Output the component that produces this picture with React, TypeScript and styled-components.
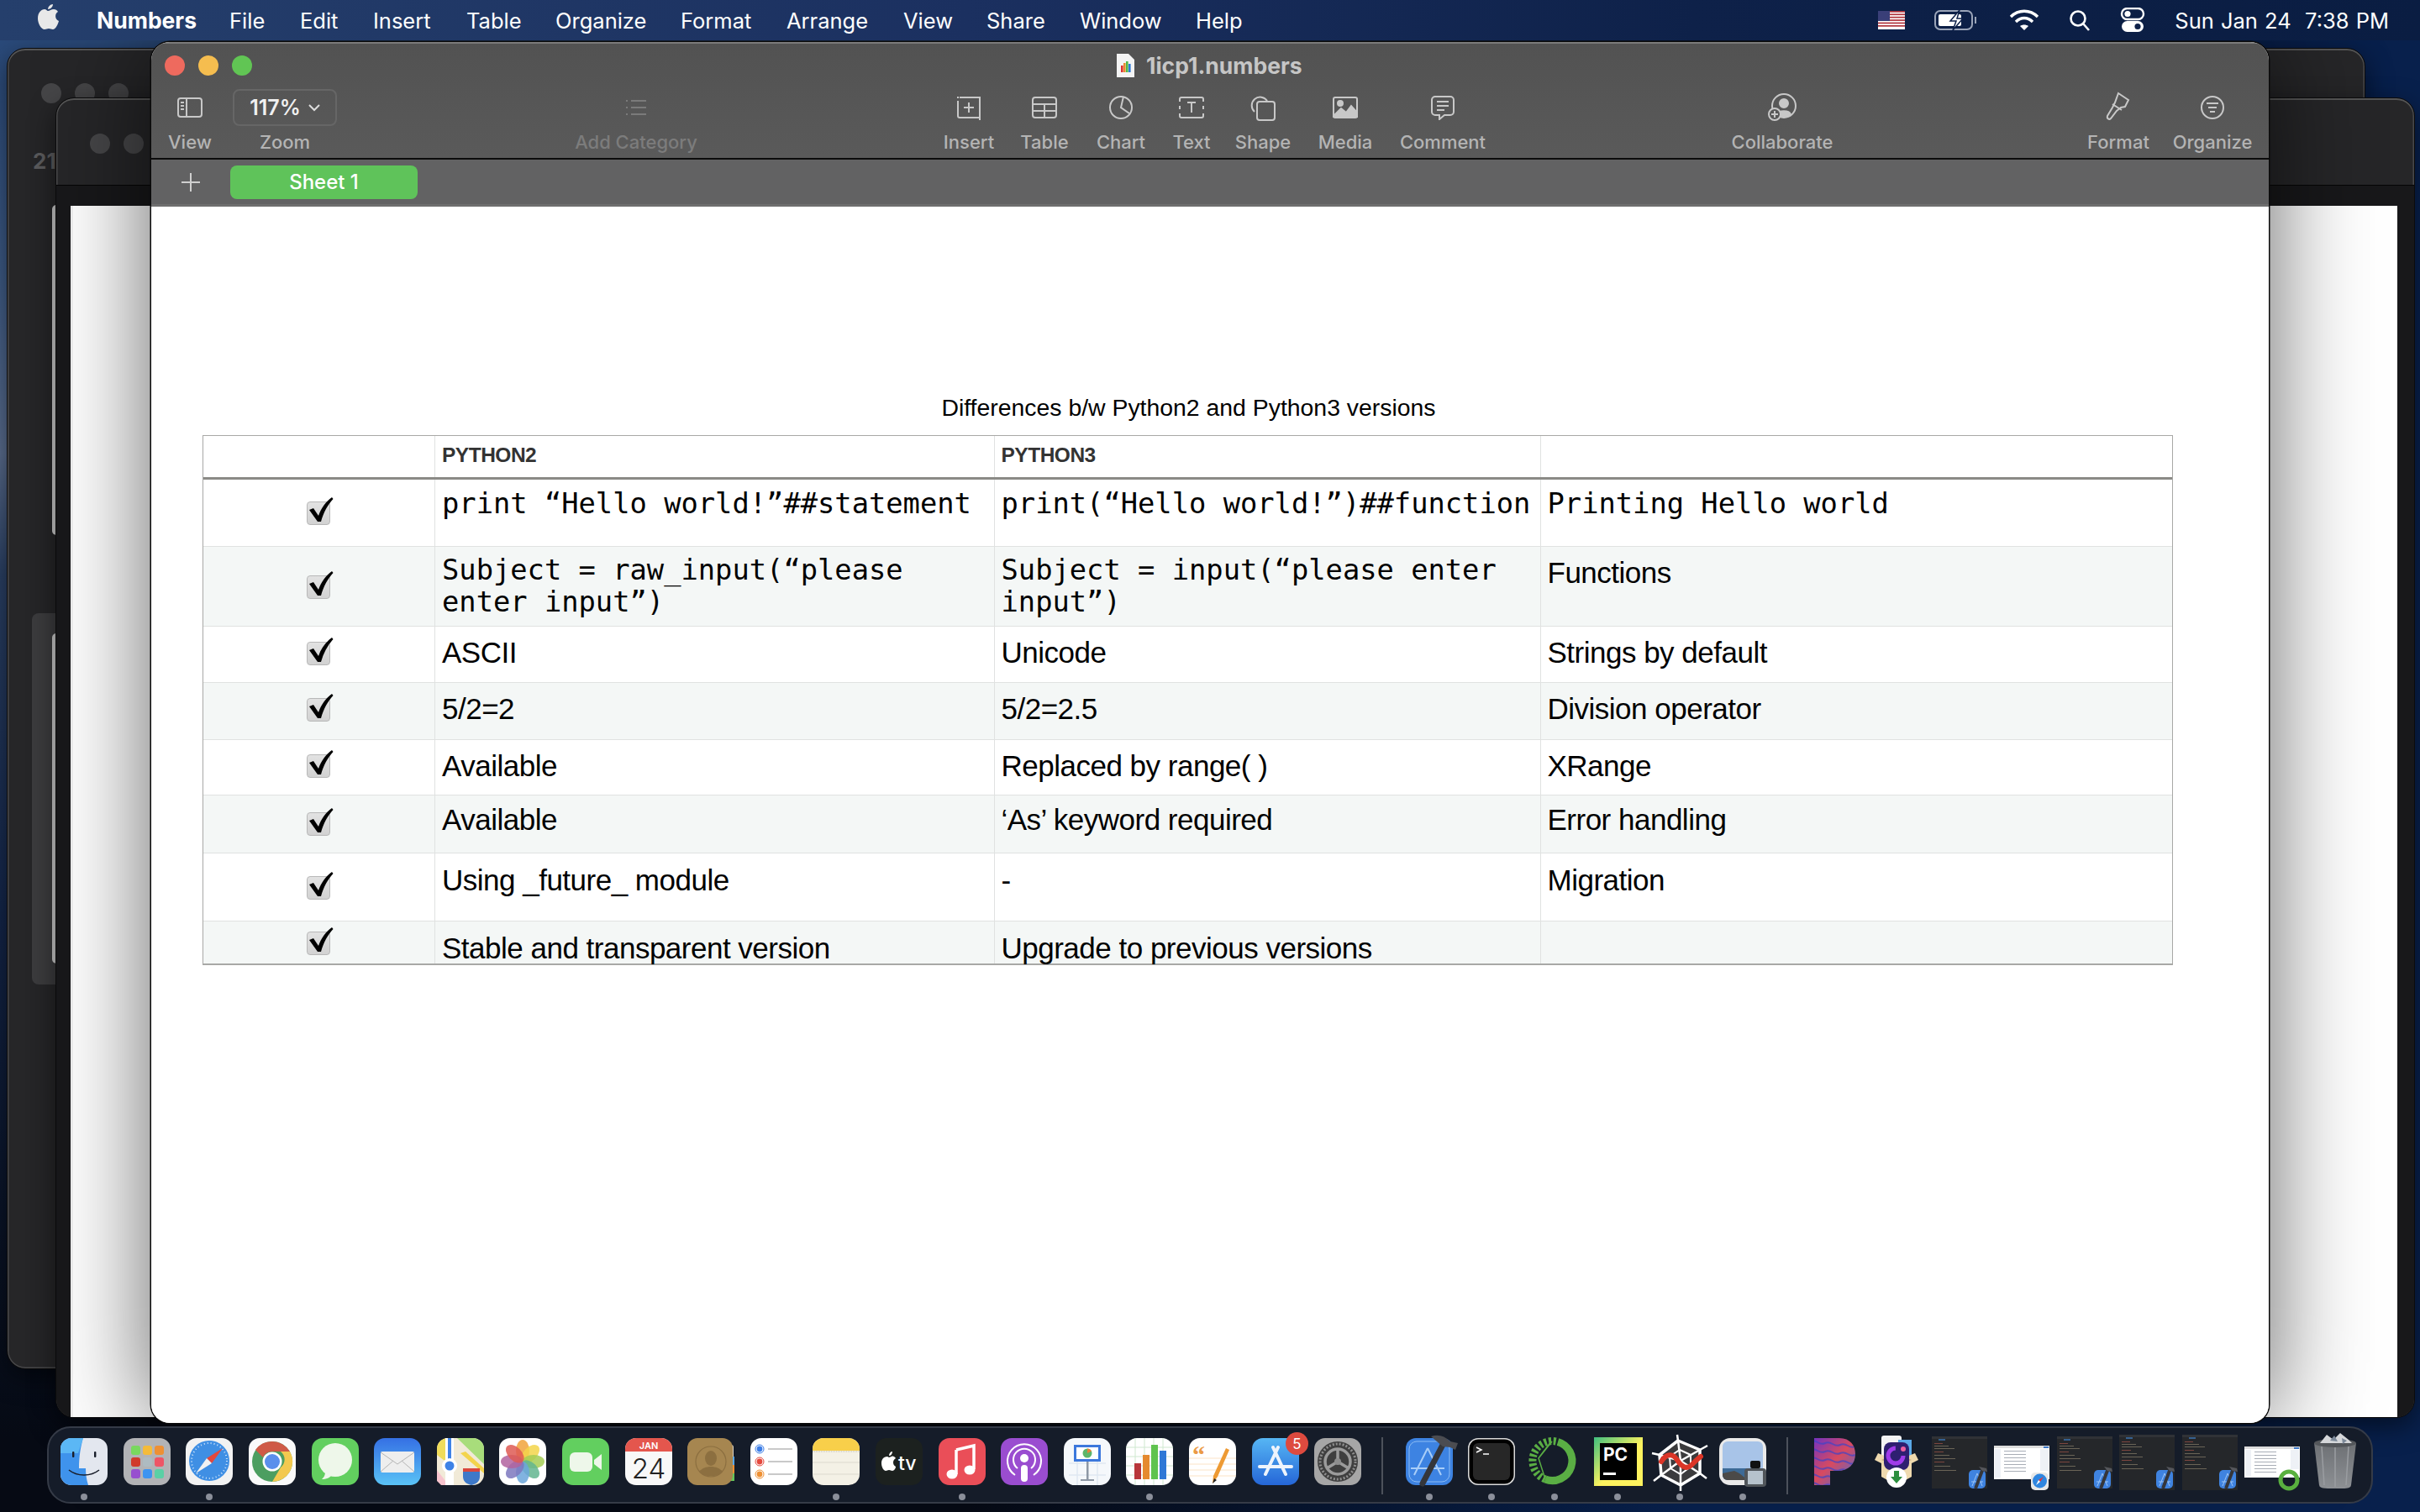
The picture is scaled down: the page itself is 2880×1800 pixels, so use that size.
import React from "react";
import styled, { createGlobalStyle } from "styled-components";

const Global = createGlobalStyle`
  html, body { margin: 0; padding: 0; background: #0a1220; }
  body { font-family: "Inter", "Liberation Sans", sans-serif; }
`;

const Desktop = styled.div`
  position: relative;
  width: 2880px;
  height: 1800px;
  overflow: hidden;
  background:
    linear-gradient(90deg, transparent 40%, #08204c 70%),
    linear-gradient(180deg, #2a4a7a 3%, #3d5a85 18%, #5a6d8e 30%, #2a4064 38%, #14264a 60%, #0a1428 80%, #060a14 95%);
`;

const MenuBar = styled.header`
  position: relative;
  z-index: 5;
  height: 48px;
  display: flex;
  align-items: center;
  padding: 0 37px 0 44px;
  box-sizing: border-box;
  background: linear-gradient(90deg, #253f6c 0%, #1b3060 40%, #0e2149 70%, #0a1d42 100%);
  color: #fff;
  font-size: 25.5px;
`;

const MenuItem = styled.span<{ $bold?: boolean; $w: number }>`
  width: ${(p) => p.$w}px;
  flex: none;
  font-weight: ${(p) => (p.$bold ? 700 : 400)};
  font-size: ${(p) => (p.$bold ? "26.5px" : "inherit")};
`;

const Status = styled.div`
  margin-left: auto;
  display: flex;
  align-items: center;
  gap: 35px;
`;

const Clock = styled.span`
  font-size: 25.5px;
  word-spacing: 1px;
`;

const BackWindow = styled.div<{ $x: number; $y: number; $w: number; $h: number }>`
  position: absolute;
  z-index: 1;
  left: ${(p) => p.$x}px;
  top: ${(p) => p.$y}px;
  width: ${(p) => p.$w}px;
  height: ${(p) => p.$h}px;
  box-sizing: border-box;
  border: 1.5px solid #0b0b0c;
  border-radius: 22px;
  background: #262628;
  box-shadow: inset 0 2px 0 #555, inset 0 0 0 1.5px #48484a, 0 10px 30px rgba(0, 0, 0, 0.5);
  overflow: hidden;
`;

const GhostDot = styled.i<{ $x: number; $y: number }>`
  position: absolute;
  left: ${(p) => p.$x}px;
  top: ${(p) => p.$y}px;
  width: 24px;
  height: 24px;
  border-radius: 50%;
  background: #464648;
`;

const GhostText = styled.span`
  position: absolute;
  left: 30px;
  top: 118px;
  font-size: 26px;
  font-weight: 700;
  color: #5b5b5d;
`;

const GhostStrip = styled.i<{ $y: number }>`
  position: absolute;
  left: 53px;
  top: ${(p) => p.$y}px;
  width: 6px;
  height: 393px;
  background: #cbcbcb;
  border-radius: 5px 0 0 5px;
`;

const GhostBlock = styled.i`
  position: absolute;
  left: 29px;
  top: 672px;
  width: 40px;
  height: 442px;
  background: #3c3c3e;
  border-radius: 8px;
`;

const BackBody = styled.div`
  position: absolute;
  left: 0;
  right: 0;
  top: 103px;
  bottom: 0;
  background: #18181a;
  border-top: 1.5px solid #050505;
  padding: 24px 20px 0 17px;
  box-sizing: border-box;
`;

const BackPage = styled.div`
  height: 100%;
  background: #fff;
  border-left: 3px solid #f0f0f0;
  box-sizing: border-box;
`;

const Win = styled.main`
  position: absolute;
  z-index: 3;
  left: 180px;
  top: 50px;
  width: 2520px;
  height: 1644px;
  border-radius: 22px;
  overflow: hidden;
  background: #fff;
  box-shadow: 0 0 0 1.5px #0a0a0a, 0 0 120px rgba(0, 0, 0, 0.62);
  display: flex;
  flex-direction: column;
`;

const TitleBar = styled.div`
  background: linear-gradient(180deg, #525252 0%, #5a5a5a 100%);
  border-top: 2px solid #7b7b7b;
  border-bottom: 2px solid #0c0c0c;
  height: 140px;
  box-sizing: border-box;
  position: relative;
`;

const Lights = styled.div`
  position: absolute;
  left: 16px;
  top: 14px;
  display: flex;
  gap: 16px;
`;

const Light = styled.i<{ $c: string }>`
  width: 24px;
  height: 24px;
  border-radius: 50%;
  background: ${(p) => p.$c};
`;

const DocTitle = styled.div`
  position: absolute;
  left: 1148px;
  top: 10px;
  display: flex;
  align-items: center;
  gap: 14px;
  color: #c6c6c6;
  font-size: 26.5px;
  font-weight: 700;
`;

const Tool = styled.div<{ $cx: number; $off?: boolean }>`
  position: absolute;
  left: ${(p) => p.$cx - 180 - 80}px;
  top: 53px;
  width: 160px;
  height: 80px;
  display: flex;
  flex-direction: column;
  align-items: center;
  color: ${(p) => (p.$off ? "#7b7b7b" : "#c8c8c8")};
`;

const ToolIcon = styled.div`
  height: 46px;
  display: flex;
  align-items: center;
  justify-content: center;
`;

const ToolLabel = styled.span<{ $off?: boolean }>`
  margin-top: 5px;
  font-size: 22px;
  line-height: 26px;
  font-weight: 500;
  color: ${(p) => (p.$off ? "#7c7c7c" : "#b4b4b4")};
`;

const ZoomBox = styled.div`
  position: absolute;
  left: 97px;
  top: 54px;
  width: 124px;
  height: 44px;
  box-sizing: border-box;
  border: 2px solid #666;
  border-radius: 8px;
  display: flex;
  align-items: center;
  justify-content: center;
  gap: 9px;
  font-size: 25px;
  font-weight: 600;
  color: #f0f0f0;
`;

const TabBar = styled.div`
  height: 56px;
  background: #626263;
  border-bottom: 3px solid #6e6e6e;
  box-sizing: border-box;
  display: flex;
  align-items: center;
  padding-left: 36px;
  gap: 36px;
  color: #cfcfcf;
`;

const SheetTab = styled.div`
  width: 223px;
  height: 40px;
  border-radius: 8px;
  background: #5fc35a;
  color: #fff;
  font-size: 24px;
  font-weight: 500;
  display: flex;
  align-items: center;
  justify-content: center;
`;

const Canvas = styled.section`
  flex: 1;
  padding: 221px 114px 0 61px;
  background: #fff;
`;

const SheetTitle = styled.div`
  font-family: "Liberation Sans", Arial, sans-serif;
  font-size: 28.4px;
  line-height: 36px;
  height: 51px;
  text-align: center;
  color: #000;
  width: 2345px;
  transform: translateX(1px);
`;

const Table = styled.div`
  width: 2345px;
  box-sizing: border-box;
  border: 1.5px solid #a8a8a6;
  border-bottom-width: 2px;
  font-family: "Liberation Sans", Arial, sans-serif;
  color: #000;
`;

const Row = styled.div<{ $h: number; $alt?: boolean; $head?: boolean }>`
  height: ${(p) => p.$h}px;
  box-sizing: border-box;
  display: grid;
  grid-template-columns: 275px 665.5px 650px 1fr;
  background: ${(p) => (p.$alt ? "#f4f7f6" : "#fff")};
  border-bottom: ${(p) => (p.$head ? "3px solid #8b8a86" : "1.5px solid #e0e2e1")};
  &:last-child {
    border-bottom: 0;
  }
`;

const Cell = styled.div<{ $mono?: boolean; $head?: boolean; $top: number }>`
  box-sizing: border-box;
  border-left: 1.5px solid #e0e2e1;
  padding: ${(p) => p.$top}px 6px 0 8px;
  font-family: ${(p) => (p.$mono ? '"DejaVu Sans Mono", monospace' : '"Liberation Sans", Arial, sans-serif')};
  font-size: ${(p) => (p.$mono ? "33.75px" : p.$head ? "24.5px" : "35px")};
  font-weight: ${(p) => (p.$head ? 700 : 400)};
  color: ${(p) => (p.$head ? "#333" : "#000")};
  line-height: ${(p) => (p.$mono ? "38px" : p.$head ? "36px" : "36px")};
  letter-spacing: ${(p) => (p.$mono ? "0" : "-0.5px")};
  white-space: pre-wrap;
`;

const CheckCell = styled.div<{ $top: number }>`
  padding: ${(p) => p.$top}px 0 0 123px;
`;

const CheckBox = styled.div`
  position: relative;
  width: 28px;
  height: 28px;
  box-sizing: border-box;
  border: 1px solid #b8b8b8;
  border-radius: 4px;
  background: linear-gradient(180deg, #e2e2e2, #d2d2d2);
`;

const Tick = styled.svg`
  position: absolute;
  left: 1px;
  top: -6px;
`;

const Dock = styled.nav`
  position: absolute;
  z-index: 4;
  left: 56px;
  top: 1698px;
  width: 2768px;
  height: 92px;
  box-sizing: border-box;
  border: 2px solid #353b47;
  border-radius: 28px;
  background: #151c29;
  padding: 12px 0 0 5px;
  display: flex;
  align-items: flex-start;
`;

const DockItem = styled.div<{ $dot?: boolean }>`
  position: relative;
  flex: none;
  width: 74.6px;
  height: 58px;
  display: flex;
  justify-content: center;
  &::after {
    content: "";
    display: ${(p) => (p.$dot ? "block" : "none")};
    position: absolute;
    left: 50%;
    margin-left: -4px;
    top: 66px;
    width: 8px;
    height: 8px;
    border-radius: 50%;
    background: #8b8f9a;
  }
`;

const DockDivider = styled.i`
  flex: none;
  width: 2px;
  height: 68px;
  margin: -1px 17px 0 15px;
  background: #4c515b;
`;

const Badge = styled.span`
  position: absolute;
  right: -2px;
  top: -7px;
  width: 27px;
  height: 27px;
  border-radius: 50%;
  background: #dd4a3f;
  color: #fff;
  font-size: 17px;
  display: flex;
  align-items: center;
  justify-content: center;
`;

const Ic = ({ children, w = 36, h = 36 }: { children: React.ReactNode; w?: number; h?: number }) => (
  <svg width={w} height={h} viewBox={`0 0 ${w} ${h}`} fill="none" stroke="currentColor" strokeWidth="2">
    {children}
  </svg>
);

const AppSvg = ({ children }: { children: React.ReactNode }) => (
  <svg width={56} height={56} viewBox="0 0 56 56" style={{ overflow: "visible" }}>
    {children}
  </svg>
);

const Thumb = ({ light, safari, ring, tall }: { light?: boolean; safari?: boolean; ring?: boolean; tall?: boolean }) => {
  const top = light ? (ring ? 10 : 9) : tall ? -4 : -2;
  const height = light ? (ring ? 37 : 40) : tall ? 66 : 62;
  return (
    <AppSvg>
      <rect x="-5" y={top} width="66" height={height} fill={light ? "#fff" : "#25272a"} />
      {light ? (
        <>
          <rect x="-5" y={top} width="66" height="3" fill="#ddd" />
          <rect x="-4" y={top + 4} width="7" height={height - 6} fill="#eef1f6" />
          {[6, 10, 14, 18, 22, 26, 30].map((o) => (
            <rect key={o} x="7" y={top + o} width={o % 4 ? 26 : 38} height="1" fill="#a8adb6" />
          ))}
          <rect x="50" y={top + 4} width="10" height={height - 14} fill="#eef1f6" />
          <rect x="54" y={top + 1} width="6" height="2" fill="#3d78c8" />
        </>
      ) : (
        <>
          <rect x="-5" y={top} width="66" height="3" fill="#303236" />
          <rect x="3" y={top + 3} width="8" height="2" fill="#35608f" />
          {[8, 11, 14, 18, 22, 26, 30, 35, 40].map((o, i) => (
            <rect key={o} x="-2" y={top + o} width={10 + ((i * 7) % 20)} height="1" fill={i % 3 ? "#6a6456" : "#7d463f"} />
          ))}
        </>
      )}
      {safari ? (
        <g transform="translate(39 41)">
          <rect width="21" height="21" rx="5" fill="#e8e8e8" />
          <circle cx="10.5" cy="10" r="8.5" fill="#2f86e0" />
          <path d="M15 5l-4 6-2-2z" fill="#e33" />
          <path d="M6 15l3-6 2 2z" fill="#fff" />
        </g>
      ) : ring ? (
        <circle cx="48" cy="50" r="10" fill="none" stroke="#59b03f" strokeWidth="5" />
      ) : light ? null : (
        <g transform="translate(39 38)">
          <rect width="20" height="22" rx="5" fill="#3f83e0" />
          <path d="M10 4l6 15M10 4L4 19M3 14h14" stroke="#9cc4f5" strokeWidth="1" fill="none" />
          <path d="M17 -2L8 22" stroke="#35363a" strokeWidth="4" />
          <path d="M12 -4l9 2 1 4-6-1z" fill="#55565b" />
        </g>
      )}
    </AppSvg>
  );
};

const icons: Record<string, React.ReactNode> = {
  finder: (
    <AppSvg>
      <rect width="56" height="56" rx="13" fill="#e3e7ef" />
      <path d="M13 0h14c-3 10-5 22-5 36h8c0 7 1 14 3 20H13A13 13 0 0 1 0 43V13A13 13 0 0 1 13 0z" fill="#3f93ec" />
      <path d="M13 0h14l-6 18H0V13A13 13 0 0 1 13 0z" fill="#63c0f7" opacity=".8" />
      <path d="M10 38c10 8 26 8 36 0" stroke="#1a1f2b" strokeWidth="1.6" fill="none" />
      <rect x="14" y="16" width="2.4" height="7" rx="1" fill="#1a1f2b" />
      <rect x="40" y="16" width="2.4" height="7" rx="1" fill="#1a1f2b" />
    </AppSvg>
  ),
  launchpad: (
    <AppSvg>
      <rect width="56" height="56" rx="13" fill="#b2b3b6" />
      {["#79d85f", "#f4bb3a", "#ee9034", "#d03a2c", "#aebbc1", "#ee5566", "#9750cf", "#3d94f0", "#5ad0a5"].map((c, i) => (
        <rect key={i} x={9 + (i % 3) * 14} y={9 + Math.floor(i / 3) * 14} width="11" height="11" rx="3" fill={c} />
      ))}
    </AppSvg>
  ),
  safari: (
    <AppSvg>
      <rect width="56" height="56" rx="13" fill="#f2f2f2" />
      <circle cx="28" cy="27" r="24" fill="#3f8fe4" />
      <circle cx="28" cy="27" r="21" fill="none" stroke="#cfe4fa" strokeWidth="2" strokeDasharray="1 3" />
      <path d="M44 12L25 24l6 6z" fill="#e5483d" />
      <path d="M12 42l13-18 6 6z" fill="#f2f2f2" />
    </AppSvg>
  ),
  chrome: (
    <AppSvg>
      <rect width="56" height="56" rx="13" fill="#fafafa" />
      <circle cx="28" cy="28" r="24" fill="#4c9e60" />
      <path d="M28 4a24 24 0 0 1 21 12H28a12 12 0 0 0-11 7L8 14A24 24 0 0 1 28 4z" fill="#cf5a47" />
      <path d="M49 16a24 24 0 0 1-21 36l10-17a12 12 0 0 0 0-19z" fill="#f3c94f" />
      <circle cx="28" cy="28" r="11.5" fill="#fff" />
      <circle cx="28" cy="28" r="9" fill="#5b8fec" />
    </AppSvg>
  ),
  messages: (
    <AppSvg>
      <rect width="56" height="56" rx="13" fill="#62cf5f" />
      <circle cx="28" cy="26" r="20" fill="#eef7ea" />
      <path d="M16 40c0 5-2 7-4 9 5 0 10-2 12-5z" fill="#eef7ea" />
    </AppSvg>
  ),
  mail: (
    <AppSvg>
      <defs>
        <linearGradient id="mailBg" x1="0" y1="0" x2="0" y2="1">
          <stop offset="0" stopColor="#3570e4" />
          <stop offset="1" stopColor="#5ac3f6" />
        </linearGradient>
      </defs>
      <rect width="56" height="56" rx="13" fill="url(#mailBg)" />
      <rect x="8" y="16" width="40" height="25" rx="2" fill="#eeeeee" />
      <path d="M8 17l20 14 20-14M8 40l15-13M48 40L33 27" stroke="#b5b5b5" strokeWidth="1" fill="none" />
    </AppSvg>
  ),
  maps: (
    <AppSvg>
      <rect width="56" height="56" rx="13" fill="#f1ead8" />
      <path d="M20 0h23a13 13 0 0 1 13 13v18L24 0z" fill="#a8dd7b" />
      <path d="M0 13A13 13 0 0 1 13 0v30L0 20z" fill="#f0dc5a" />
      <path d="M0 38l14 18H5l-5-5z" fill="#f7c4ce" />
      <path d="M28 18l28 24v-6L34 16z" fill="#f3d44c" />
      <rect x="10" width="10" height="56" fill="#fff" />
      <rect x="13" width="4" height="26" fill="#3e82e6" />
      <circle cx="15" cy="33" r="9" fill="#fff" />
      <circle cx="15" cy="33" r="5.5" fill="#3e82e6" />
      <path d="M31 38h20v8c0 6-5 9-10 10-5-1-10-4-10-10z" fill="#3d78c8" />
      <rect x="31" y="36" width="20" height="4" fill="#d9473d" />
    </AppSvg>
  ),
  photos: (
    <AppSvg>
      <rect width="56" height="56" rx="13" fill="#fff" />
      {[
        ["#f1a33c", 0], ["#f3d54a", 45], ["#a5cc55", 90], ["#63b58f", 135],
        ["#6ba6da", 180], ["#7d78be", 225], ["#b1639f", 270], ["#de5a54", 315],
      ].map(([c, a]) => (
        <ellipse key={a as number} cx="28" cy="15" rx="8" ry="13" fill={c as string} opacity=".85" transform={`rotate(${a} 28 28)`} />
      ))}
    </AppSvg>
  ),
  facetime: (
    <AppSvg>
      <rect width="56" height="56" rx="13" fill="#62cf5f" />
      <rect x="9" y="17" width="27" height="23" rx="6" fill="#eef7ea" />
      <path d="M38 26l9-7v19l-9-7z" fill="#eef7ea" />
    </AppSvg>
  ),
  calendar: (
    <AppSvg>
      <rect width="56" height="56" rx="13" fill="#f8f8f8" />
      <path d="M13 0h30a13 13 0 0 1 13 13v3H0v-3A13 13 0 0 1 13 0z" fill="#e4564d" />
      <text x="28" y="12.5" fontSize="11" fontWeight="600" fill="#fff" textAnchor="middle" fontFamily="Inter">JAN</text>
      <text x="28" y="48" fontSize="33" fill="#222" textAnchor="middle" fontFamily="Inter" fontWeight="300">24</text>
    </AppSvg>
  ),
  contacts: (
    <AppSvg>
      <rect x="48" y="8" width="7" height="42" rx="3" fill="#d9d2c4" />
      <rect x="50" y="22" width="6" height="10" fill="#5aa8e8" />
      <rect x="50" y="32" width="6" height="10" fill="#ee9034" />
      <rect x="50" y="42" width="6" height="9" fill="#66c55a" />
      <rect width="54" height="56" rx="12" fill="#a68650" />
      <circle cx="28" cy="28" r="18" fill="none" stroke="#8c6f40" strokeWidth="1.2" />
      <ellipse cx="28" cy="24" rx="7" ry="9" fill="#8c6f40" />
      <path d="M14 40c6-8 22-8 28 0-6 7-22 7-28 0z" fill="#8c6f40" />
    </AppSvg>
  ),
  reminders: (
    <AppSvg>
      <rect width="56" height="56" rx="13" fill="#fff" />
      {[["#3d7ee6", 13], ["#e5483d", 28], ["#ee9034", 43]].map(([c, y]) => (
        <g key={y as number}>
          <circle cx="11" cy={y as number} r="5" fill="#fff" stroke={c as string} strokeWidth="1" />
          <circle cx="11" cy={y as number} r="3.4" fill={c as string} />
          <rect x="21" y={(y as number) - 1} width="29" height="2" fill="#c9c9c9" />
        </g>
      ))}
    </AppSvg>
  ),
  notes: (
    <AppSvg>
      <rect width="56" height="56" rx="13" fill="#f4f1e6" />
      <path d="M13 0h30a13 13 0 0 1 13 13v2H0v-2A13 13 0 0 1 13 0z" fill="#f8cf4a" />
      <path d="M0 29h56M0 43h56" stroke="#dcd9ce" strokeWidth="1" />
      <path d="M0 16h56" stroke="#bdb9ac" strokeWidth="1" strokeDasharray="1 1" />
    </AppSvg>
  ),
  tv: (
    <AppSvg>
      <rect width="56" height="56" rx="13" fill="#1c211f" />
      <path d="M14 22c-5 0-7 4-7 8 0 5 3 9 5 9s2-1 4-1 2 1 4 1c2 0 4-3 4-5-4-2-4-8 0-10-1-2-4-3-5-2-1 0-2 1-3 1s-1-1-2-1z" fill="#fff" />
      <path d="M16 21c0-3 2-5 4-5 0 3-2 5-4 5z" fill="#fff" />
      <text x="27" y="38" fontSize="23" fill="#fff" fontFamily="Inter" fontWeight="500">tv</text>
    </AppSvg>
  ),
  music: (
    <AppSvg>
      <rect width="56" height="56" rx="13" fill="#ea4e58" />
      <path d="M21 14l21-5v28" stroke="#fff" strokeWidth="3.5" fill="none" />
      <path d="M21 14v29" stroke="#fff" strokeWidth="3.5" />
      <ellipse cx="16" cy="43" rx="6.5" ry="5.5" fill="#fff" />
      <ellipse cx="37" cy="38" rx="6.5" ry="5.5" fill="#fff" />
    </AppSvg>
  ),
  podcasts: (
    <AppSvg>
      <rect width="56" height="56" rx="13" fill="#9a4dd0" />
      <path d="M17 44a20 20 0 1 1 22 0" fill="none" stroke="#fff" strokeWidth="2" />
      <path d="M20 36a13 13 0 1 1 16 0" fill="none" stroke="#fff" strokeWidth="2" />
      <circle cx="28" cy="24" r="5" fill="#fff" />
      <rect x="24" y="32" width="8" height="20" rx="4" fill="#fff" />
    </AppSvg>
  ),
  keynote: (
    <AppSvg>
      <rect width="56" height="56" rx="13" fill="#f5f8fb" />
      <path d="M6 30h44M6 44h44M16 20v36M40 20v36" stroke="#dfe8f2" strokeWidth="1.5" />
      <rect x="12" y="8" width="32" height="20" fill="#3c78dc" />
      <rect x="15" y="11" width="26" height="14" fill="#fff" />
      <circle cx="28" cy="18" r="5.5" fill="#5db66a" />
      <path d="M28 18v-5.5a5.5 5.5 0 0 1 5 3z" fill="#e8803a" />
      <rect x="27" y="28" width="2.5" height="22" fill="#8e98a5" />
      <rect x="20" y="49" width="16" height="2" fill="#8e98a5" />
    </AppSvg>
  ),
  numbers: (
    <AppSvg>
      <rect width="56" height="56" rx="13" fill="#fff" />
      <path d="M0 11h56M0 22h56M0 33h56M0 44h56M11 0v56M22 0v56M33 0v56M44 0v56" stroke="#cfe8cf" strokeWidth="1" />
      <rect x="10" y="30" width="8" height="19" fill="#b8363a" />
      <rect x="20" y="20" width="8" height="29" fill="#e58a2f" />
      <rect x="30" y="8" width="8" height="41" fill="#5fc34e" />
      <rect x="40" y="15" width="8" height="34" fill="#2f78d6" />
    </AppSvg>
  ),
  pages: (
    <AppSvg>
      <rect width="56" height="56" rx="13" fill="#fff" />
      <path d="M0 24h56M0 31h56M0 38h56M0 45h56" stroke="#fbe3c6" strokeWidth="1" />
      <text x="4" y="30" fontSize="30" fontWeight="700" fill="#eb9a45" fontFamily="Liberation Serif">“</text>
      <path d="M48 14L34 46l-6 8 1-9 15-33z" fill="#ee9a33" />
      <path d="M30 48l-2 6 5-4z" fill="#222" />
    </AppSvg>
  ),
  store: (
    <AppSvg>
      <defs>
        <linearGradient id="storeBg" x1="0" y1="0" x2="0" y2="1">
          <stop offset="0" stopColor="#56b6f4" />
          <stop offset="1" stopColor="#2566d8" />
        </linearGradient>
      </defs>
      <rect width="56" height="56" rx="13" fill="url(#storeBg)" />
      <path d="M31 11L16 43M25 11l15 32M9 34h38" stroke="#eef4fc" strokeWidth="4" strokeLinecap="round" fill="none" />
    </AppSvg>
  ),
  settings: (
    <AppSvg>
      <rect width="56" height="56" rx="13" fill="#a6a6a6" />
      <circle cx="28" cy="28" r="24" fill="#3f3f3f" />
      <circle cx="28" cy="28" r="21" fill="none" stroke="#8e8e8e" strokeWidth="3" strokeDasharray="2 2" />
      <circle cx="28" cy="28" r="15" fill="none" stroke="#9b9b9b" strokeWidth="3.5" />
      <path d="M28 28v-15M28 28L15 36M28 28l13 8" stroke="#9b9b9b" strokeWidth="3.5" />
      <circle cx="28" cy="28" r="4" fill="#8e8e8e" />
    </AppSvg>
  ),
  xcode: (
    <AppSvg>
      <rect width="56" height="56" rx="12" fill="#3d83e2" />
      <rect x="4" y="4" width="48" height="48" rx="9" fill="none" stroke="#8dbcf3" strokeWidth="1" />
      <path d="M26 12L10 44M26 12l16 32M6 36h40" stroke="#a8cdf8" strokeWidth="2" fill="none" />
      <path d="M44 8L20 54" stroke="#34363b" strokeWidth="7" strokeLinecap="round" />
      <path d="M30 -2C38 -5 46 -3 53 4L62 6 59 14 53 11 44 10z" fill="#4b4c51" />
    </AppSvg>
  ),
  terminal: (
    <AppSvg>
      <rect width="56" height="56" rx="12" fill="#d9d9d9" />
      <rect x="1.5" y="1.5" width="53" height="53" rx="11" fill="#000" />
      <rect x="6" y="6" width="44" height="44" rx="6" fill="#272727" />
      <path d="M10 11l6 3-6 3" stroke="#fff" strokeWidth="1.5" fill="none" />
      <path d="M18 19h7" stroke="#fff" strokeWidth="1.5" />
    </AppSvg>
  ),
  anaconda: (
    <AppSvg>
      <path d="M32 4.500A23.500 23.500 0 1 1 17 49" fill="none" stroke="#5aae44" strokeWidth="9" />
      <path d="M17 49A23.500 23.500 0 0 1 32 4.500" fill="none" stroke="#5aae44" strokeWidth="9" strokeDasharray="3 2.500" />
      <path d="M24 4L9 24l8 25M9 24l16-20" stroke="#5aae44" strokeWidth="1.5" fill="none" />
    </AppSvg>
  ),
  pycharm: (
    <AppSvg>
      <defs>
        <linearGradient id="pcBg" x1="0" y1="0" x2="1" y2="1">
          <stop offset="0" stopColor="#3fbf7f" />
          <stop offset=".55" stopColor="#fdf25e" />
        </linearGradient>
      </defs>
      <rect y="-1" width="58" height="58" fill="url(#pcBg)" />
      <rect x="7" y="6" width="44" height="44" fill="#000" />
      <text x="11" y="27" fontSize="21" fontWeight="700" fill="#fff" fontFamily="Inter">PC</text>
      <rect x="11" y="41" width="15" height="3" fill="#fff" />
    </AppSvg>
  ),
  spider: (
    <AppSvg>
      <path d="M26 3l26 11v28L29 56 6 44 4 20z" fill="#3b3b3d" stroke="#fff" strokeWidth="3.5" strokeLinejoin="round" />
      <path d="M26 3l-1-7M52 14l9-5M52 42l8 6M29 56v7M6 44l-9 7M4 20l-9-2" stroke="#fff" strokeWidth="2.5" />
      <path d="M29 27L26 3M29 27L52 14M29 27l23 15M29 27v29M29 27L6 44M29 27L4 20" stroke="#fff" strokeWidth="2.5" />
      <path d="M28 14l13 6v14l-12 9-12-7-1-14z" fill="none" stroke="#fff" strokeWidth="2" />
      <path d="M6 28C12 18 20 18 25 26S36 38 42 32 50 24 53 22" stroke="#db3527" strokeWidth="6" fill="none" strokeLinecap="round" />
    </AppSvg>
  ),
  preview: (
    <AppSvg>
      <rect width="56" height="56" rx="13" fill="#eaeaea" />
      <rect x="4" y="4" width="48" height="46" rx="6" fill="#a8c4e8" />
      <path d="M4 36h30v14H10a6 6 0 0 1-6-6z" fill="#3c6a96" />
      <path d="M4 42l14-3 6 3 10 8H10a6 6 0 0 1-6-6z" fill="#4b4a48" />
      <rect x="30" y="36" width="26" height="22" rx="4" fill="#50555a" />
      <rect x="34" y="39" width="18" height="16" fill="#b6c2cc" />
      <rect x="37" y="27" width="12" height="9" rx="2" fill="#111" />
    </AppSvg>
  ),
  pandora: (
    <AppSvg>
      <defs>
        <linearGradient id="pBg" x1="0" y1="0" x2="1" y2="1">
          <stop offset="0" stopColor="#6a31c9" />
          <stop offset=".5" stopColor="#d84a60" />
          <stop offset="1" stopColor="#3b6fe0" />
        </linearGradient>
        <clipPath id="pClip">
          <path d="M5 0h30c13 0 19 9 19 19 0 12-8 20-21 20h-9v17H5z" />
        </clipPath>
      </defs>
      <g clipPath="url(#pClip)">
        <rect width="56" height="56" fill="url(#pBg)" />
        {[-6, 4, 14, 24, 34, 44, 54].map((y) => (
          <path key={y} d={`M0 ${y}c8 -4 10 6 18 2s10 6 18 2 10 6 18 2`} fill="none" stroke="#3d45c8" strokeWidth="2" opacity=".7" />
        ))}
      </g>
    </AppSvg>
  ),
  installer: (
    <AppSvg>
      <rect x="10" y="-3" width="24" height="30" rx="3" fill="#f4f4f4" />
      <rect x="30" y="2" width="16" height="24" fill="#5aa8e8" />
      <path d="M28 27L6 18l-4 8 8 4v16l18 10 18-10V30l8-4-4-8z" fill="#eed9ae" />
      <path d="M28 34L10 26l18-8 18 8z" fill="#c9b088" />
      <rect x="13" y="5" width="30" height="33" rx="8" fill="#2e1f70" />
      <circle cx="27" cy="21" r="9" fill="none" stroke="#a03bea" strokeWidth="5" strokeDasharray="42 15" />
      <circle cx="36" cy="13" r="3" fill="#ec5fa0" />
      <circle cx="28" cy="47" r="12" fill="#fff" />
      <path d="M25 39h6v7h4l-7 8-7-8h4z" fill="#2c8f3e" />
    </AppSvg>
  ),
  trash: (
    <AppSvg>
      <defs>
        <linearGradient id="trashBg" x1="0" y1="0" x2="0" y2="1">
          <stop offset="0" stopColor="#6d7074" />
          <stop offset="1" stopColor="#8d9094" />
        </linearGradient>
      </defs>
      <path d="M3 6h50l-6 50c-1 4-5 4-19 4s-18 0-19-4z" fill="url(#trashBg)" />
      <path d="M12 10l3 46M28 10v48M44 10l-3 46" stroke="#9a9da1" strokeWidth="1.5" />
      <ellipse cx="28" cy="6" rx="25" ry="5" fill="#54575b" />
      <path d="M10 6l8-10 8 6 8-8 10 8 4 4z" fill="#d5d7da" />
      <path d="M22 3l5-6 4 7zM36 0l6 3-5 4z" fill="#7d8a9a" />
    </AppSvg>
  ),
};

type DockEntry = { id?: string; dot?: boolean; badge?: string; thumb?: React.ReactNode; divider?: boolean };

const dockItems: DockEntry[] = [
  { id: "finder", dot: true }, { id: "launchpad" }, { id: "safari", dot: true }, { id: "chrome" }, { id: "messages" },
  { id: "mail" }, { id: "maps" }, { id: "photos" }, { id: "facetime" }, { id: "calendar" }, { id: "contacts" },
  { id: "reminders" }, { id: "notes", dot: true }, { id: "tv" }, { id: "music", dot: true }, { id: "podcasts" },
  { id: "keynote" }, { id: "numbers", dot: true }, { id: "pages" }, { id: "store", badge: "5" }, { id: "settings" },
  { divider: true },
  { id: "xcode", dot: true }, { id: "terminal", dot: true }, { id: "anaconda", dot: true }, { id: "pycharm", dot: true },
  { id: "spider", dot: true }, { id: "preview", dot: true },
  { divider: true },
  { id: "pandora" }, { id: "installer" }, { thumb: <Thumb /> }, { thumb: <Thumb light safari /> }, { thumb: <Thumb /> },
  { thumb: <Thumb tall /> }, { thumb: <Thumb tall /> }, { thumb: <Thumb light ring /> }, { id: "trash" },
];

const menu: [string, number, boolean?][] = [
  ["Numbers", 158, true], ["File", 84], ["Edit", 87], ["Insert", 111], ["Table", 106], ["Organize", 149],
  ["Format", 126], ["Arrange", 139], ["View", 99], ["Share", 111], ["Window", 138], ["Help", 70],
];

const tools: [string, number, React.ReactNode][] = [
  ["Insert", 1153, <Ic key="i" w={32} h={32}><path d="M5 4h24v24H5a2 2 0 0 1-2-2V8" /><path d="M3 3v2M29 29v2M16 10v12M10 16h12" /></Ic>],
  ["Table", 1243, <Ic key="t" w={32} h={32}><rect x="2" y="4" width="28" height="24" rx="3" /><path d="M2 12h28M2 20h28M16 12v16" /></Ic>],
  ["Chart", 1334, <Ic key="c" w={32} h={32}><circle cx="16" cy="16" r="13" /><path d="M19 3l-3 13 10 7" /></Ic>],
  ["Text", 1418, <Ic key="x" w={32} h={32}><path d="M2 9V6a2 2 0 0 1 2-2h24a2 2 0 0 1 2 2v3M2 14v4M30 14v4M2 23v3a2 2 0 0 0 2 2h24a2 2 0 0 0 2-2v-3M11 10h10M16 10v12" /></Ic>],
  ["Shape", 1503, <Ic key="s" w={32} h={34}><path d="M6 22A10 10 0 1 1 21 9" /><rect x="9" y="10" width="21" height="22" rx="3" /></Ic>],
  ["Media", 1601, <Ic key="m" w={32} h={32}><rect x="2" y="4" width="28" height="24" rx="2" /><circle cx="10" cy="11" r="3" fill="currentColor" /><path d="M2 26l9-9 6 5 6-8 7 8v5H2z" fill="currentColor" /></Ic>],
  ["Comment", 1717, <Ic key="o" w={30} h={30}><path d="M6 2h18a4 4 0 0 1 4 4v14a4 4 0 0 1-4 4h-7l-6 5v-5H6a4 4 0 0 1-4-4V6a4 4 0 0 1 4-4z" /><path d="M8 8h14M8 13h14M8 18h9" /></Ic>],
  ["Collaborate", 2121, <Ic key="b" w={34} h={34}><circle cx="19" cy="15" r="14" /><circle cx="19" cy="12" r="5" fill="currentColor" /><path d="M11 25c2-5 14-5 16 0-4 4-12 4-16 0z" fill="currentColor" /><circle cx="8" cy="25" r="7" fill="#585858" /><path d="M8 21v8M4 25h8" /></Ic>],
  ["Format", 2521, <Ic key="f" w={30} h={38}><path d="M15 2l12 8-4 8-5 1-5 4-7 9c-2 2-5 0-4-3l6-10 3-6z" /><path d="M8 15l11 7" /></Ic>],
  ["Organize", 2633, <Ic key="g" w={32} h={32}><circle cx="16" cy="16" r="13" /><path d="M9 11h14M11 16h10M13 21h6" /></Ic>],
];

// line-height is 36 on text rows, so $top is 2px more than a 40px line would need
const rows = [
  { h: 80, chk: 26, top: 10, mono: true, cells: ["print “Hello world!”##statement", "print(“Hello world!”)##function", "Printing Hello world"] },
  { h: 95, chk: 34, top: 9, mono: true, alt: true, cells: ["Subject = raw_input(“please enter input”)", "Subject = input(“please enter input”)", ""], last: "Functions" },
  { h: 67, chk: 18, top: 13, cells: ["ASCII", "Unicode", "Strings by default"] },
  { h: 68, chk: 18, top: 13, alt: true, cells: ["5/2=2", "5/2=2.5", "Division operator"] },
  { h: 66, chk: 17, top: 13, cells: ["Available", "Replaced by range( )", "XRange"] },
  { h: 69, chk: 20, top: 11, alt: true, cells: ["Available", "‘As’ keyword required", "Error handling"] },
  { h: 81, chk: 27, top: 14, cells: ["Using _future_ module", "-", "Migration"] },
  { h: 50, chk: 12, top: 14, alt: true, cells: ["Stable and transparent version", "Upgrade to previous versions", ""] },
];

function Check({ top }: { top: number }) {
  return (
    <CheckCell $top={top}>
      <CheckBox>
        <Tick width="30" height="30" viewBox="0 0 30 30">
          <path d="M1 15l5-2 6 9C15 13 21 5 28 0l1.500 2C23 9 18 18 15 29h-4z" fill="#000" />
        </Tick>
      </CheckBox>
    </CheckCell>
  );
}

export default function App() {
  return (
    <Desktop>
      <Global />
      <MenuBar>
        <MenuItem $w={71}>
          <svg width="26" height="32" viewBox="0 0 26 32" fill="#e8e8e8">
            <path d="M13 8c2 0 4-2 7-2 2 0 4 1 5 3-4 2-4 9 1 11-1 4-4 10-7 10-2 0-3-1-5-1s-3 1-5 1C5 30 1 23 1 17 1 10 5 6 9 6c2 0 3 2 4 2z" />
            <path d="M13 6c0-3 3-6 6-6 0 3-3 6-6 6z" />
          </svg>
        </MenuItem>
        {menu.map(([t, w, b]) => (
          <MenuItem key={t} $w={w} $bold={b}>{t}</MenuItem>
        ))}
        <Status>
          <svg width="32" height="22" viewBox="0 0 32 22">
            <rect width="32" height="22" fill="#fff" />
            {[0, 2, 4, 6, 8, 10].map((i) => (
              <rect key={i} y={i * 1.7} width="32" height="1.7" fill="#b0343c" />
            ))}
            <rect width="14" height="12" fill="#3a3f78" />
          </svg>
          <svg width="54" height="26" viewBox="0 0 54 26" fill="none">
            <rect x="1" y="2" width="44" height="22" rx="6" stroke="#9aa4b8" strokeWidth="2" />
            <rect x="5" y="6" width="27" height="14" rx="2" fill="#fff" />
            <path d="M30 1L19 14h7l-4 11 12-14h-7z" fill="#fff" stroke="#0e2149" strokeWidth="1.5" />
            <path d="M49 9v8" stroke="#9aa4b8" strokeWidth="2" />
          </svg>
          <svg width="36" height="26" viewBox="0 0 36 26" fill="none" stroke="#fff" strokeWidth="3.4">
            <path d="M2 9c9-9 23-9 32 0M8 15c6-6 14-6 20 0" />
            <path d="M18 25l-5-5c3-2 7-2 10 0z" fill="#fff" stroke="none" />
          </svg>
          <svg width="26" height="26" viewBox="0 0 26 26" fill="none" stroke="#fff" strokeWidth="2.6">
            <circle cx="11" cy="11" r="8.5" />
            <path d="M17 17l7 8" />
          </svg>
          <svg width="30" height="30" viewBox="0 0 30 30">
            <rect x="2" y="1" width="26" height="13" rx="6.5" fill="none" stroke="#fff" strokeWidth="2.4" />
            <circle cx="9" cy="7.5" r="3.6" fill="#fff" />
            <rect x="2" y="16" width="26" height="13" rx="6.5" fill="#fff" />
            <circle cx="21" cy="22.5" r="3.6" fill="#0e2149" />
          </svg>
          <Clock>Sun Jan 24&nbsp; 7:38 PM</Clock>
        </Status>
      </MenuBar>

      <BackWindow $x={8} $y={57} $w={2807} $h={1573}>
        <GhostDot $x={40} $y={41} />
        <GhostDot $x={80} $y={41} />
        <GhostDot $x={120} $y={41} />
        <GhostText>21</GhostText>
        <GhostBlock />
        <GhostStrip $y={186} />
        <GhostStrip $y={696} />
      </BackWindow>
      <BackWindow $x={66} $y={116} $w={2808} $h={1572}>
        <GhostDot $x={40} $y={42} />
        <GhostDot $x={80} $y={42} />
        <BackBody>
          <BackPage />
        </BackBody>
      </BackWindow>

      <Win>
        <TitleBar>
          <Lights>
            <Light $c="#ee6a5e" />
            <Light $c="#f5bd4f" />
            <Light $c="#61c554" />
          </Lights>
          <DocTitle>
            <svg width="22" height="28" viewBox="0 0 22 28">
              <path d="M1 0h14l7 7v21H1z" fill="#f4f4f4" />
              <rect x="6" y="14" width="2.6" height="8" fill="#d33" />
              <rect x="9" y="11" width="2.6" height="11" fill="#e88a2f" />
              <rect x="12" y="9" width="2.6" height="13" fill="#4fb848" />
              <rect x="15" y="12" width="2.6" height="10" fill="#2f78d6" />
            </svg>
            1icp1.numbers
          </DocTitle>
          <Tool $cx={226}>
            <ToolIcon>
              <Ic w={32} h={26}>
                <rect x="2" y="2" width="28" height="22" rx="3" />
                <path d="M12 2v22M5 7h4M5 11h4M5 15h4" />
              </Ic>
            </ToolIcon>
            <ToolLabel>View</ToolLabel>
          </Tool>
          <ZoomBox>
            117%
            <svg width="14" height="9" viewBox="0 0 14 9" fill="none" stroke="#ddd" strokeWidth="2">
              <path d="M1 1l6 6 6-6" />
            </svg>
          </ZoomBox>
          <Tool $cx={339}>
            <ToolIcon />
            <ToolLabel>Zoom</ToolLabel>
          </Tool>
          <Tool $cx={757} $off>
            <ToolIcon>
              <Ic w={28} h={24}>
                <path d="M8 4h18M8 12h18M8 20h18M2 4h2M2 12h2M2 20h2" />
              </Ic>
            </ToolIcon>
            <ToolLabel $off>Add Category</ToolLabel>
          </Tool>
          {tools.map(([label, cx, icon]) => (
            <Tool key={label} $cx={cx}>
              <ToolIcon>{icon}</ToolIcon>
              <ToolLabel>{label}</ToolLabel>
            </Tool>
          ))}
        </TitleBar>
        <TabBar>
          <svg width="22" height="22" viewBox="0 0 22 22" stroke="currentColor" strokeWidth="2">
            <path d="M11 0v22M0 11h22" />
          </svg>
          <SheetTab>Sheet 1</SheetTab>
        </TabBar>
        <Canvas>
          <SheetTitle>Differences b/w Python2 and Python3 versions</SheetTitle>
          <Table>
            <Row $h={52} $head>
              <div />
              <Cell $head $top={5}>PYTHON2</Cell>
              <Cell $head $top={5}>PYTHON3</Cell>
              <Cell $head $top={5} />
            </Row>
            {rows.map((r, i) => (
              <Row key={i} $h={r.h} $alt={r.alt}>
                <Check top={r.chk} />
                <Cell $mono={r.mono} $top={r.top}>{r.cells[0]}</Cell>
                <Cell $mono={r.mono} $top={r.top}>{r.cells[1]}</Cell>
                {r.last ? (
                  <Cell $top={r.top + 4}>{r.last}</Cell>
                ) : (
                  <Cell $mono={r.mono} $top={r.top}>{r.cells[2]}</Cell>
                )}
              </Row>
            ))}
          </Table>
        </Canvas>
      </Win>

      <Dock>
        {dockItems.map((d, i) =>
          d.divider ? (
            <DockDivider key={i} />
          ) : (
            <DockItem key={i} $dot={d.dot}>
              {d.thumb || (d.id && icons[d.id])}
              {d.badge && <Badge>{d.badge}</Badge>}
            </DockItem>
          )
        )}
      </Dock>
    </Desktop>
  );
}
